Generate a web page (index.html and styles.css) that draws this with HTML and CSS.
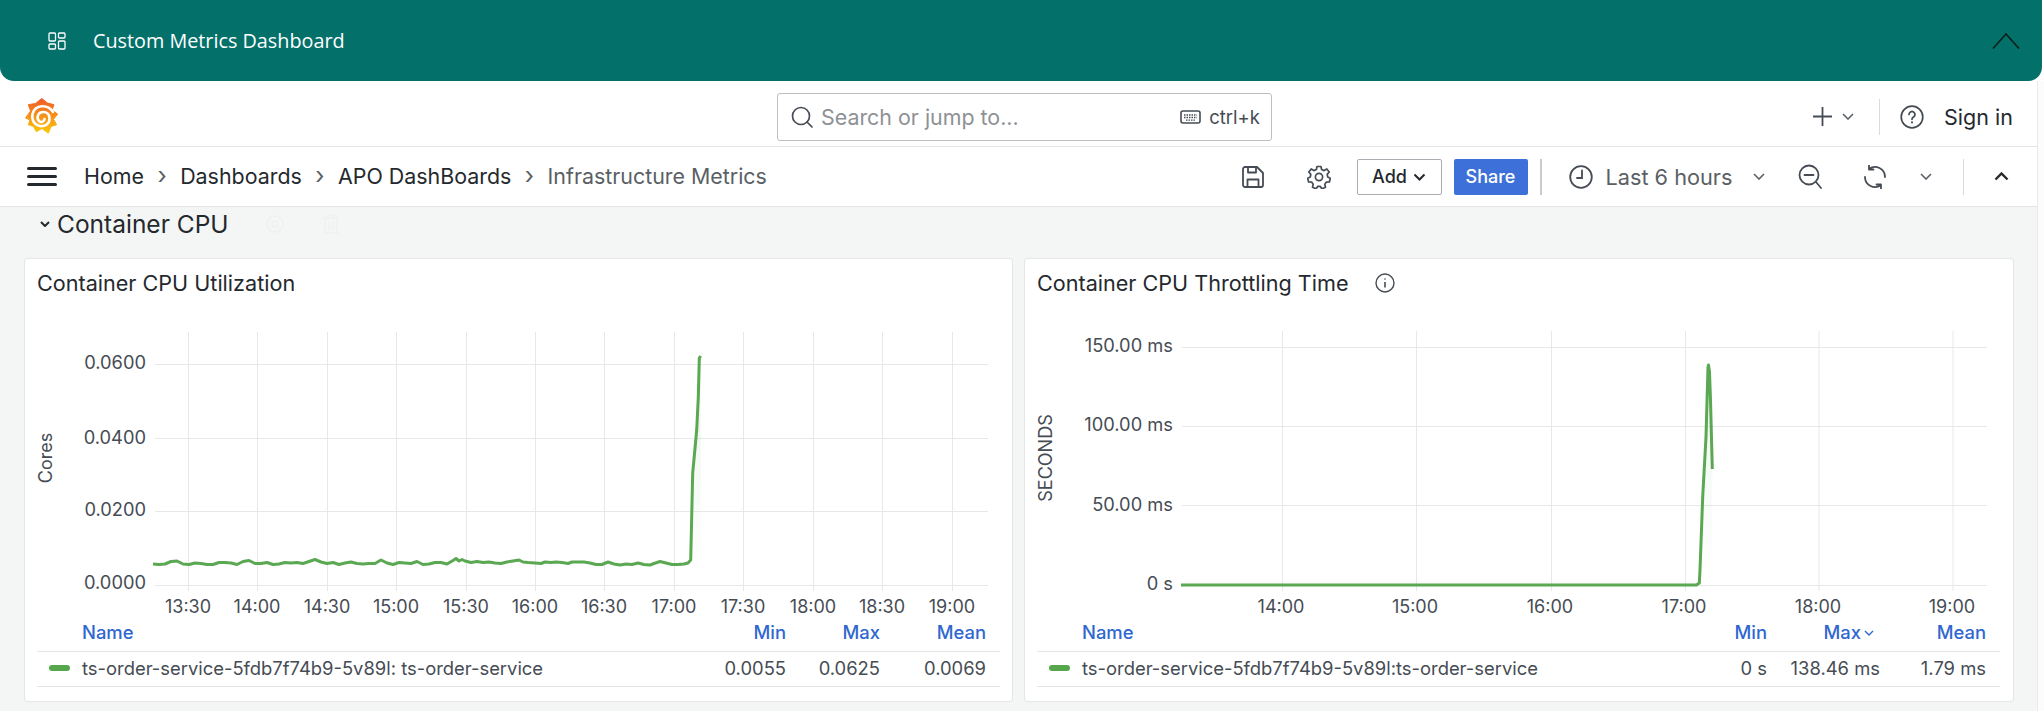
FILE: index.html
```html
<!DOCTYPE html>
<html lang="en">
<head>
    <meta charset="UTF-8">
    <title>Infrastructure Metrics</title>
    <link rel="stylesheet" href="styles.css">
</head>
<body>
<div class="banner">
    <svg class="banner-icon" width="18" height="18" viewBox="0 0 18 18" fill="none" stroke="#fff" stroke-width="1.3">
        <rect x="1" y="1" width="6.5" height="8" rx="1"/>
        <rect x="1" y="12" width="6.5" height="5" rx="1"/>
        <rect x="10.5" y="1" width="6.5" height="5" rx="1"/>
        <rect x="10.5" y="9" width="6.5" height="8" rx="1"/>
    </svg>
    <span class="banner-title">Custom Metrics Dashboard</span>
    <svg class="banner-toggle" width="28" height="16" viewBox="0 0 28 16" fill="none" stroke="#0c1f1d" stroke-width="1.6">
        <path d="M1 15.5 14 1l13 14.5"/>
    </svg>
</div>

<div class="page">
    <div class="main">
        <div class="topbar">
            <svg class="logo" width="34" height="37" viewBox="0 0 34 37">
                <defs>
                    <linearGradient id="logoFill" x1="0" y1="0" x2="0" y2="1">
                        <stop offset="0" stop-color="#f05a28"/>
                        <stop offset="1" stop-color="#fbca0a"/>
                    </linearGradient>
                </defs>
                <polygon fill="url(#logoFill)" stroke="url(#logoFill)" stroke-linejoin="round" points="16.7,0.5 22.5,5 29,6.7 27,12 32.7,16 28.5,21.5 31.7,26.7 26,28.5 23.3,35.3 17,30.5 11.3,33.7 8.5,28.5 3.3,26.7 5,22 0.5,20 5.5,13 3.3,6.7 10.5,5.5"/>
                <path d="M28 14C23 6 10 6 7.500 16C6 25 13 30 20 27.500C26.500 24.500 26 14 18 14C13 14 11 20 14 23C16 25 19.500 23.500 19.500 21" fill="none" stroke="#fff" stroke-width="2.600" stroke-linecap="round"/>
            </svg>
            <div class="search">
                <svg class="search-icon" width="22" height="22" viewBox="0 0 22 22" fill="none" stroke="#464c54" stroke-width="1.700">
                    <circle cx="10" cy="10" r="8.500"/>
                    <path d="m16 16 5 5" stroke-linecap="round"/>
                </svg>
                <span class="search-text">Search or jump to...</span>
                <svg class="kbd-icon" width="21" height="14" viewBox="0 0 21 14" fill="none" stroke="#464c54">
                    <rect x="1" y="1" width="19" height="12" rx="2" stroke-width="1.600"/>
                    <path d="M4 5h13M4 7.500h13M6 10.200h9" stroke-width="1.300" stroke-dasharray="1.500 1"/>
                </svg>
                <span class="search-key">ctrl+k</span>
            </div>
            <svg class="plus" width="19" height="19" viewBox="0 0 19 19" stroke="#464c54" stroke-width="1.800">
                <path d="M9.500 0v19M0 9.500h19"/>
            </svg>
            <svg class="chev plus-chev" width="12" height="7" viewBox="0 0 12 7"><path d="m1 1 5 5 5-5"/></svg>
            <span class="top-sep"></span>
            <svg class="help" width="24" height="24" viewBox="0 0 24 24" fill="none" stroke="#464c54" stroke-width="1.700">
                <circle cx="12" cy="12" r="10.800"/>
                <path d="M9 9.500a3 3 0 1 1 4.500 2.600c-1 .6-1.500 1.100-1.500 2.200" stroke-linecap="round"/>
                <path d="M12 17.200v.4" stroke-linecap="round" stroke-width="2"/>
            </svg>
            <span class="sign-in">Sign in</span>
        </div>

        <div class="toolbar">
            <div class="burger"><i></i><i></i><i></i></div>
            <nav class="crumbs">
                <a>Home</a><span class="crumb-sep">›</span>
                <a>Dashboards</a><span class="crumb-sep">›</span>
                <a>APO DashBoards</a><span class="crumb-sep">›</span>
                <a class="current">Infrastructure Metrics</a>
            </nav>
            <svg class="tool-save" width="22" height="22" viewBox="0 0 22 22" fill="none" stroke="#464c54" stroke-width="1.800" stroke-linejoin="round">
                <path d="M3 1h12l6 6v12a2 2 0 0 1-2 2H3a2 2 0 0 1-2-2V3a2 2 0 0 1 2-2Z"/>
                <path d="M6 1v5.500h8V1M5.500 21v-7.500h11V21"/>
            </svg>
            <svg class="tool-gear" width="24" height="24" viewBox="0 0 24 24" fill="none" stroke="#464c54" stroke-width="1.700" stroke-linejoin="round">
                <circle cx="12" cy="12" r="3.600"/>
                <path d="M10 1.500h4l.6 3 2.500 1.100 2.700-1.600 2.400 3-2 2.400.5 2.600 2.600 1.200-.9 3.800-3 .1-1.600 2.100.7 3-3.500 1.600-1.900-2.400h-2.200l-1.900 2.400-3.500-1.600.7-3-1.600-2.100-3-.1-.9-3.800 2.600-1.200.5-2.600-2-2.400 2.400-3 2.700 1.600L9.400 4.500Z"/>
            </svg>
            <button class="btn-add">Add
                <svg class="chev chev-dark" width="13" height="8" viewBox="0 0 13 8"><path d="m1.500 1.500 5 5 5-5"/></svg>
            </button>
            <button class="btn-share">Share</button>
            <span class="tool-sep"></span>
            <svg class="tool-clock" width="24" height="24" viewBox="0 0 24 24" fill="none" stroke="#464c54" stroke-width="1.800">
                <circle cx="12" cy="12" r="10.800"/>
                <path d="M13 5.500V13H8" stroke-linecap="round"/>
            </svg>
            <span class="time-range">Last 6 hours</span>
            <svg class="chev time-chev" width="12" height="7" viewBox="0 0 12 7"><path d="m1 1 5 5 5-5"/></svg>
            <svg class="tool-zoom" width="24" height="26" viewBox="0 0 24 26" fill="none" stroke="#464c54" stroke-width="1.800" stroke-linecap="round">
                <circle cx="11" cy="11" r="9.500"/>
                <path d="M6.500 11h9M18 18l5 6"/>
            </svg>
            <svg class="tool-refresh" width="24" height="24" viewBox="0 0 24 24" fill="none" stroke="#464c54" stroke-width="1.800" stroke-linecap="round" stroke-linejoin="round">
                <path d="M22 12A10 10 0 0 0 6 4M6 .5V4.500h4.500"/>
                <path d="M2 12a10 10 0 0 0 16 8M18 23.500V19.500h-4.500"/>
            </svg>
            <svg class="chev refresh-chev" width="12" height="7" viewBox="0 0 12 7"><path d="m1 1 5 5 5-5"/></svg>
            <span class="tool-sep-thin"></span>
            <svg class="chev chev-dark tool-up" width="15" height="9" viewBox="0 0 15 9"><path d="m1.500 7.500 6-6 6 6" stroke-width="2.400"/></svg>
        </div>

        <div class="content">
            <div class="row-head">
                <svg class="chev chev-dark row-chev" width="10" height="6" viewBox="0 0 10 6"><path d="m1 1 4 4 4-4"/></svg>
                <span class="row-title">Container CPU</span>
                <svg class="row-ghost" width="20" height="20" viewBox="0 0 20 20" fill="none" stroke="#eff0f0" stroke-width="1.500">
                    <circle cx="10" cy="10" r="3"/><circle cx="10" cy="10" r="8"/>
                </svg>
                <svg class="row-ghost row-ghost-trash" width="18" height="20" viewBox="0 0 18 20" fill="none" stroke="#eff0f0" stroke-width="1.500">
                    <path d="M1 4h16M6 4V1h6v3M3 4v15h12V4M7 8v8M11 8v8"/>
                </svg>
            </div>
            <div class="panels">
                <section class="panel">
                    <h3 class="panel-title">Container CPU Utilization</h3>
                    <svg class="chart" width="987" height="300" viewBox="25 320 987 300">
                        <defs>
                            <linearGradient id="fadeA" x1="0" y1="0" x2="0" y2="1">
                                <stop offset="0" stop-color="#56a64b" stop-opacity="0.12"/>
                                <stop offset="1" stop-color="#56a64b" stop-opacity="0"/>
                            </linearGradient>
                        </defs>
                        <g class="grid">
                            <path d="M155 364.500H988M155 438.500H988M155 511.500H988M155 585.500H988"/>
                            <path d="M188.500 332V591M257.500 332V591M327.500 332V591M396.500 332V591M466.500 332V591M535.500 332V591M604.500 332V591M674.500 332V591M743.500 332V591M813.500 332V591M882.500 332V591M952.500 332V591"/>
                        </g>
                        <polygon fill="url(#fadeA)" points="690.700,560 692.700,473 696.700,430 698.300,397 699.300,358 700.700,356 700.700,585"/>
                        <polyline class="series" points="153,564 159,564.500 165,564 171,561.500 177,561 183,564 189,564.500 195,563 201,563.500 207,564.500 213,564.500 219,562.500 225,562.500 231,563 237,564.500 243,561.500 249,560.500 255,563.500 261,563.500 267,562.500 273,564.500 279,564 285,562.500 291,563 297,562.500 303,563.500 309,561.500 315,559.500 321,562 327,563.500 333,562.500 339,564.500 345,563 351,562 357,563.500 363,564 369,563.500 375,563.500 381,560 387,563 393,564.500 399,562.500 405,563 411,563.500 417,561.500 423,564.500 429,564 435,562.500 441,562.500 447,564 453,560.500 456,558.500 459,561 462,559.500 465,561 471,562.500 477,561.500 483,562.500 489,562 495,563 501,563.500 507,562 513,561 519,560 523,562 528,562.500 535,563 541,563.500 545,562 551,562.500 556,562 562,562.500 568,563.500 572,562 578,562 584,562 590,563 596,564.500 602,564.500 608,562 614,564 620,565 626,564 632,564.500 638,563 644,564.500 650,565 654,563.500 660,561.500 666,563 672,564.500 678,564.500 684,564 688,563 690.700,560 692.700,473 696.700,430 698.300,397 699.300,358 700.700,356"/>
                        <text class="tick" x="146" y="361.500">0.0600</text>
                        <text class="tick" x="146" y="436.500">0.0400</text>
                        <text class="tick" x="146" y="508.500">0.0200</text>
                        <text class="tick" x="146" y="582">0.0000</text>
                        <text class="axis-name" transform="translate(45 458) rotate(-90)">Cores</text>
                        <text class="tick-x" x="188" y="606">13:30</text>
                        <text class="tick-x" x="257" y="606">14:00</text>
                        <text class="tick-x" x="327" y="606">14:30</text>
                        <text class="tick-x" x="396" y="606">15:00</text>
                        <text class="tick-x" x="466" y="606">15:30</text>
                        <text class="tick-x" x="535" y="606">16:00</text>
                        <text class="tick-x" x="604" y="606">16:30</text>
                        <text class="tick-x" x="674" y="606">17:00</text>
                        <text class="tick-x" x="743" y="606">17:30</text>
                        <text class="tick-x" x="813" y="606">18:00</text>
                        <text class="tick-x" x="882" y="606">18:30</text>
                        <text class="tick-x" x="952" y="606">19:00</text>
                    </svg>
                    <div class="legend legend-cpu">
                        <div class="legend-head">
                            <span class="legend-name">Name</span><span>Min</span><span>Max</span><span>Mean</span>
                        </div>
                        <div class="legend-row">
                            <span class="legend-name"><i class="legend-dash"></i>ts-order-service-5fdb7f74b9-5v89l: ts-order-service</span>
                            <span>0.0055</span><span>0.0625</span><span>0.0069</span>
                        </div>
                    </div>
                </section>

                <section class="panel">
                    <h3 class="panel-title">Container CPU Throttling Time
                        <svg class="info" width="20" height="20" viewBox="0 0 20 20" fill="none" stroke="#464c54" stroke-width="1.400">
                            <circle cx="10" cy="10" r="9"/>
                            <path d="M10 9v5.500" stroke-width="1.600"/>
                            <path d="M10 5.500v1" stroke-width="1.800"/>
                        </svg>
                    </h3>
                    <svg class="chart" width="988" height="300" viewBox="1025 320 988 300">
                        <defs>
                            <linearGradient id="fadeB" x1="0" y1="0" x2="0" y2="1">
                                <stop offset="0" stop-color="#56a64b" stop-opacity="0.1"/>
                                <stop offset="1" stop-color="#56a64b" stop-opacity="0"/>
                            </linearGradient>
                        </defs>
                        <g class="grid">
                            <path d="M1182 347.500H1987M1182 426.500H1987M1182 505.500H1987M1182 585.500H1987"/>
                            <path d="M1282.500 331V591M1416.500 331V591M1551.500 331V591M1685.500 331V591M1819 331V591M1953 331V591"/>
                        </g>
                        <polygon fill="url(#fadeB)" points="1699.300,581 1702.700,497 1706,437 1708.300,365 1712.300,469 1712.300,585"/>
                        <polyline class="series" points="1181,585 1696.500,585 1699.300,583 1700,570 1702.700,497 1706,437 1708,367 1708.500,365 1709.500,372 1710.500,400 1712.300,469"/>
                        <text class="tick" x="1173" y="345">150.00 ms</text>
                        <text class="tick" x="1173" y="424">100.00 ms</text>
                        <text class="tick" x="1173" y="503.500">50.00 ms</text>
                        <text class="tick" x="1173" y="582.500">0 s</text>
                        <text class="axis-name" transform="translate(1045 458) rotate(-90)">SECONDS</text>
                        <text class="tick-x" x="1281" y="606">14:00</text>
                        <text class="tick-x" x="1415" y="606">15:00</text>
                        <text class="tick-x" x="1550" y="606">16:00</text>
                        <text class="tick-x" x="1684" y="606">17:00</text>
                        <text class="tick-x" x="1818" y="606">18:00</text>
                        <text class="tick-x" x="1952" y="606">19:00</text>
                    </svg>
                    <div class="legend legend-throttle">
                        <div class="legend-head">
                            <span class="legend-name">Name</span><span>Min</span>
                            <span class="sorted">Max<svg class="sort-chev" width="10" height="6" viewBox="0 0 10 6"><path d="m1 1 4 4 4-4"/></svg></span>
                            <span>Mean</span>
                        </div>
                        <div class="legend-row">
                            <span class="legend-name"><i class="legend-dash"></i>ts-order-service-5fdb7f74b9-5v89l:ts-order-service</span>
                            <span>0 s</span><span>138.46 ms</span><span>1.79 ms</span>
                        </div>
                    </div>
                </section>
            </div>
        </div>
    </div>
    <div class="scroll-strip"></div>
</div>
</body>
</html>
```

FILE: styles.css
```css
* {
    box-sizing: border-box;
}
html, body {
    margin: 0;
    padding: 0;
    height: 711px;
    overflow: hidden;
    background-color: #fff;
    font-family: Inter, "Liberation Sans", sans-serif;
    color: #24292e;
}
svg {
    display: block;
    flex-shrink: 0;
}

/* banner */
.banner {
    display: flex;
    align-items: center;
    height: 81px;
    width: 2042px;
    padding-left: 48px;
    background-color: #03706a;
    border-radius: 0 0 14px 14px;
}
.banner-title {
    margin-left: 27px;
    font-family: "Open Sans", sans-serif;
    font-size: 19.800px;
    color: #fff;
}
.banner-toggle {
    margin-left: auto;
    margin-right: 22px;
}

.page {
    display: flex;
    height: 630px;
}
.main {
    width: 2037px;
}
.scroll-strip {
    width: 7px;
    border-left: 1px solid #e8eaeb;
    background-color: #fcfcfc;
}

/* top bar */
.topbar {
    display: flex;
    align-items: center;
    height: 66px;
    padding-top: 6px;
    padding-left: 25px;
    background-color: #fff;
    border-bottom: 1px solid #e2e4e6;
}
.search {
    display: flex;
    align-items: center;
    width: 495px;
    height: 48px;
    margin-left: 718px;
    padding-left: 13px;
    border: 1px solid #bdbfc2;
    border-radius: 3px;
}
.search-text {
    margin-left: 8px;
    font-size: 21.400px;
    color: #8e9195;
}
.kbd-icon {
    margin-left: auto;
}
.search-key {
    margin-left: 8px;
    margin-right: 11px;
    font-size: 18.500px;
    color: #464c54;
}
.plus {
    margin-left: 541px;
}
.chev {
    fill: none;
    stroke: #5a5f65;
    stroke-width: 1.600;
}
.chev-dark {
    stroke: #24292e;
    stroke-width: 2;
}
.plus-chev {
    margin-left: 10px;
}
.top-sep {
    width: 1px;
    height: 36px;
    margin-left: 25px;
    background-color: #d8dadc;
}
.help {
    margin-left: 20px;
}
.sign-in {
    margin-left: 20px;
    font-size: 21.500px;
}

/* toolbar */
.toolbar {
    display: flex;
    align-items: center;
    height: 60px;
    padding-left: 27px;
    background-color: #fff;
    border-bottom: 1px solid #e2e4e6;
}
.burger {
    display: flex;
    flex-direction: column;
    gap: 5px;
    width: 30px;
}
.burger i {
    height: 3px;
    border-radius: 2px;
    background-color: #24292e;
}
.crumbs {
    display: flex;
    align-items: center;
    width: 1157.500px;
    margin-left: 27px;
    padding-bottom: 1px;
    font-size: 21.400px;
}
.crumb-sep {
    margin: 0 13.500px;
    font-size: 24px;
    line-height: 1;
    color: #5a5f65;
}
.current {
    color: #5a5f65;
}
.tool-gear {
    margin-left: 43px;
}
.btn-add, .btn-share {
    display: flex;
    align-items: center;
    justify-content: center;
    height: 36px;
    border-radius: 2px;
    font-family: inherit;
    font-size: 18px;
    font-weight: 500;
}
.btn-add {
    gap: 6px;
    width: 85px;
    margin-left: 26px;
    border: 1px solid #a9acb0;
    background-color: #fff;
    color: #24292e;
}
.btn-share {
    width: 74px;
    margin-left: 12px;
    border: none;
    background-color: #3d71d9;
    color: #fff;
}
.tool-sep {
    width: 2px;
    height: 36px;
    margin-left: 12px;
    background-color: #c9cbce;
}
.tool-clock {
    margin-left: 27px;
}
.time-range {
    width: 147px;
    margin-left: 13px;
    font-size: 21.700px;
    color: #5a5f65;
}
.tool-zoom {
    margin-left: 33px;
}
.tool-refresh {
    margin-left: 41px;
}
.refresh-chev {
    margin-left: 33px;
}
.tool-sep-thin {
    width: 1px;
    height: 36px;
    margin-left: 31px;
    background-color: #d8dadc;
}
.tool-up {
    margin-left: 30px;
}

/* dashboard */
.content {
    height: 504px;
    padding-left: 25px;
    background-color: #f4f5f5;
}
.row-head {
    display: flex;
    align-items: center;
    height: 34px;
    margin-bottom: 18px;
    padding-left: 15px;
}
.row-title {
    margin-left: 7px;
    font-size: 24.500px;
    font-weight: 420;
}
.row-ghost {
    margin-left: 36px;
}
.row-ghost-trash {
    margin-left: 37px;
}
.panels {
    display: grid;
    grid-template-columns: 987px 988px;
    gap: 13px;
}
.panel {
    height: 442px;
    background-color: #fff;
    border-radius: 3px;
    box-shadow: 0 0 0 1px #e4e6e7;
}
.panel-title {
    display: flex;
    align-items: center;
    gap: 26px;
    height: 61px;
    margin: 0;
    padding: 0 12px 13px;
    font-size: 21.600px;
    font-weight: 420;
}
.grid path {
    fill: none;
    stroke: #e7e8e9;
    stroke-width: 1;
}
.series {
    fill: none;
    stroke: #5aa851;
    stroke-width: 3;
    stroke-linejoin: round;
}
.tick, .tick-x, .axis-name {
    font-family: Inter, sans-serif;
    font-size: 18px;
    fill: #464c54;
    dominant-baseline: central;
}
.tick {
    font-size: 18.300px;
    text-anchor: end;
}
.tick-x, .axis-name {
    text-anchor: middle;
}

/* legend */
.legend {
    width: 963px;
    margin-left: 12px;
    font-size: 18.400px;
}
.legend-cpu .legend-head, .legend-cpu .legend-row {
    grid-template-columns: 1fr 94px 94px 106px;
}
.legend-throttle .legend-head, .legend-throttle .legend-row {
    grid-template-columns: 1fr 100px 113px 106px;
}
.legend-head, .legend-row {
    display: grid;
    align-items: center;
    padding-right: 14px;
    text-align: right;
}
.legend-head {
    height: 32px;
    padding-bottom: 8px;
    font-weight: 450;
    color: #2f67d0;
    border-bottom: 1px solid #e2e4e6;
}
.legend-row {
    height: 35px;
    padding-bottom: 2px;
    color: #464c54;
    border-bottom: 1px solid #e2e4e6;
}
.legend-name {
    display: flex;
    align-items: center;
    padding-left: 45px;
    text-align: left;
    position: relative;
}
.legend-dash {
    position: absolute;
    left: 12px;
    top: 50%;
    width: 21px;
    height: 6px;
    margin-top: -3px;
    border-radius: 3px;
    background-color: #56a64b;
}
.sorted {
    position: relative;
    padding-right: 19px;
}
.sort-chev {
    position: absolute;
    right: 6px;
    top: 9px;
    fill: none;
    stroke: #2f67d0;
    stroke-width: 1.400;
}
```
